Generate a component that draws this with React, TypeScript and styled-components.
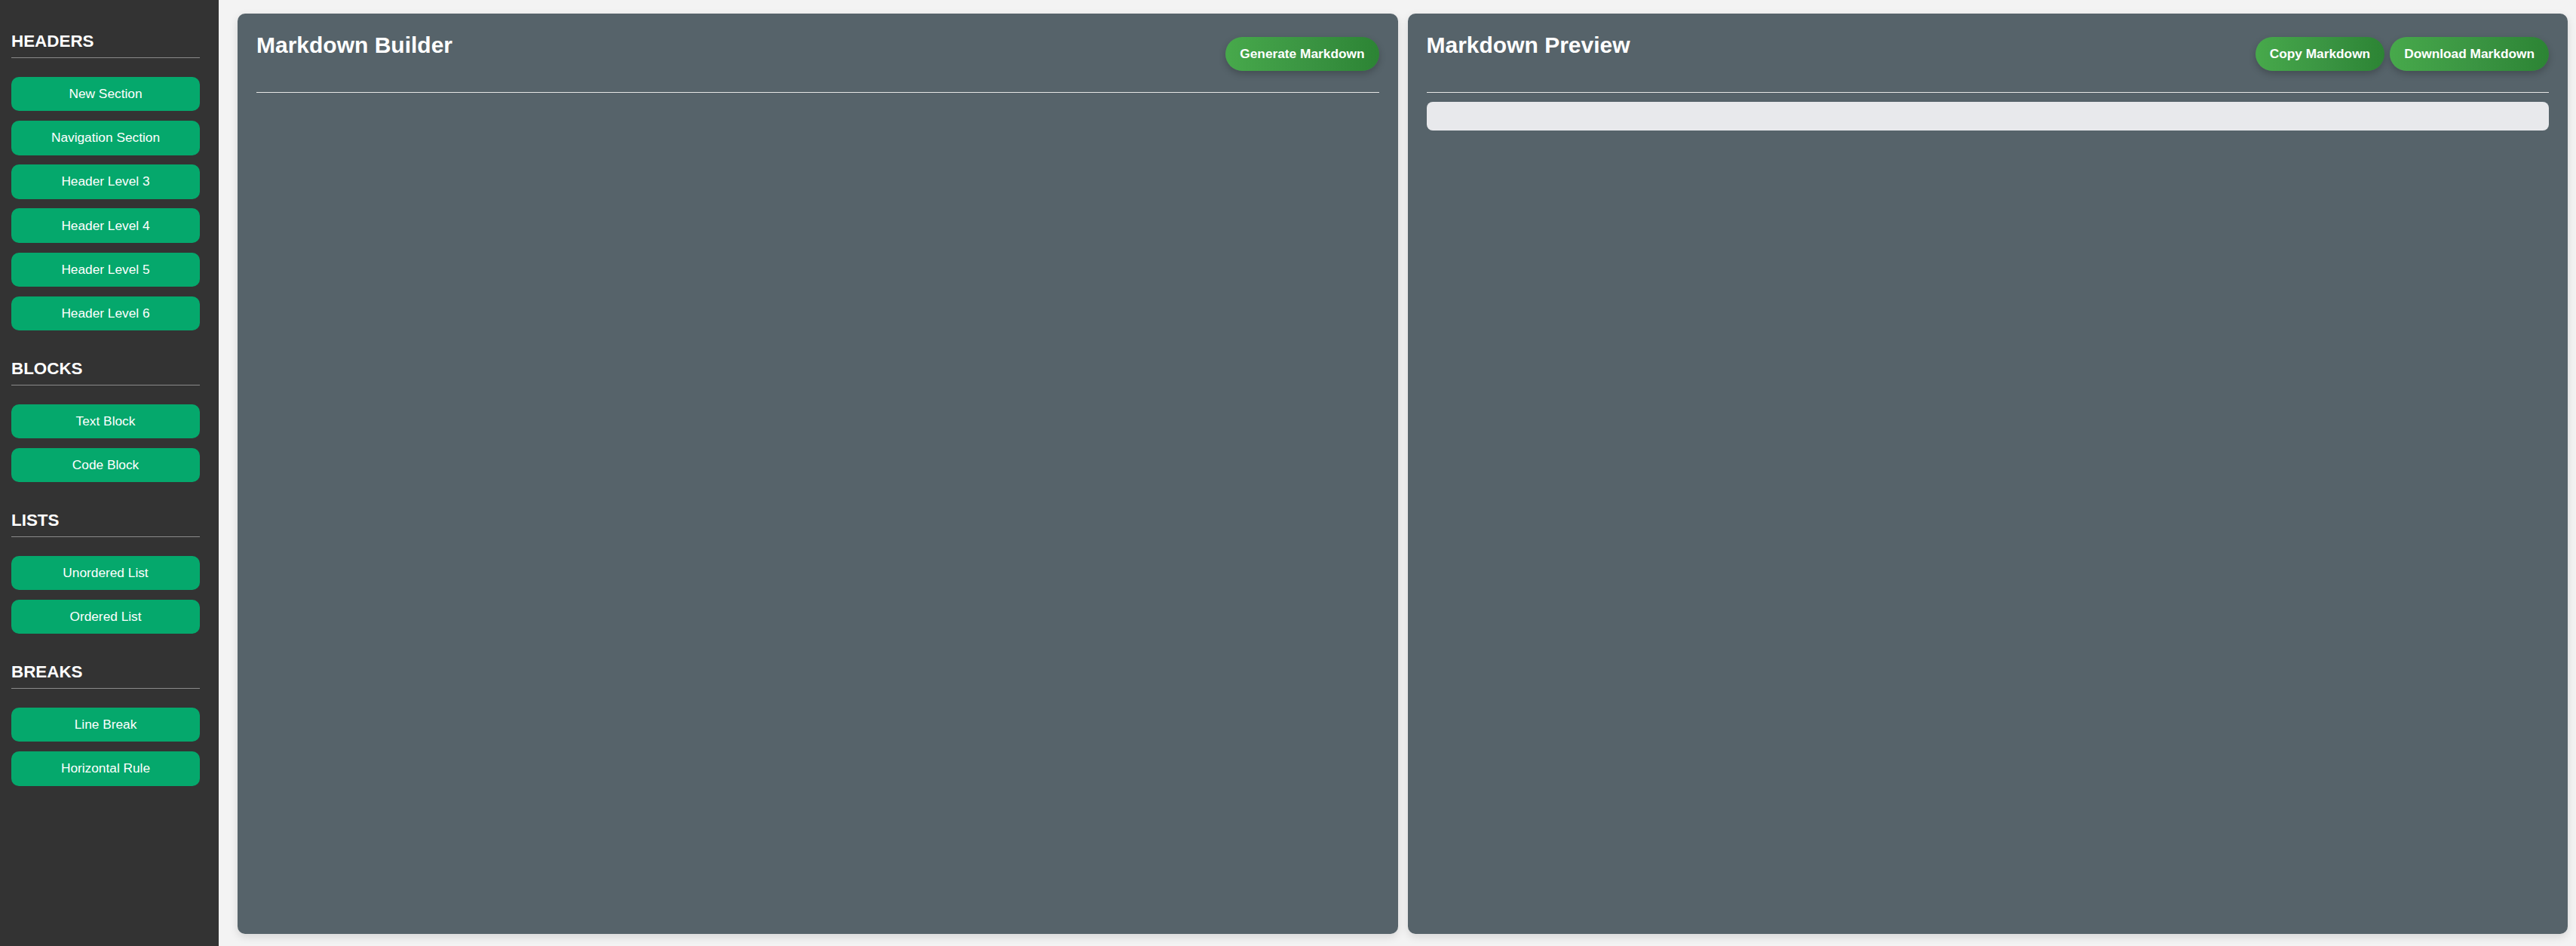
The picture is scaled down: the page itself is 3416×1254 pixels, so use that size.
import React from "react";
import styled, { createGlobalStyle } from "styled-components";

const GlobalStyle = createGlobalStyle`
  html, body {
    margin: 0;
    padding: 0;
    background: #f3f3f3;
    font-family: "Liberation Sans", Arial, sans-serif;
  }
  * { box-sizing: border-box; }
`;

const Layout = styled.div`
  display: flex;
  height: 1254px;
  width: 3416px;
  background: #f3f3f3;
`;

const Sidebar = styled.aside`
  width: 290px;
  flex: none;
  background: #333333;
  padding: 42px 25px 20px 15px;
  display: flex;
  flex-direction: column;
  gap: 37.5px;
`;

const Section = styled.section`
  display: flex;
  flex-direction: column;
`;

const SectionTitle = styled.h3`
  margin: 0 0 25px;
  padding-bottom: 8px;
  border-bottom: 1px solid #8a8a8a;
  color: #ffffff;
  font-size: 22.4px;
  font-weight: 700;
  line-height: 25.8px;
`;

const ButtonList = styled.div`
  display: flex;
  flex-direction: column;
  gap: 12.6px;
`;

const SideButton = styled.button`
  height: 45.6px;
  border: none;
  border-radius: 10px;
  background: #05a86c;
  color: #ffffff;
  font-family: "Liberation Sans", Arial, sans-serif;
  font-size: 17.3px;
  padding: 0;
  cursor: pointer;
`;

const Main = styled.main`
  flex: 1;
  display: flex;
  gap: 13px;
  padding: 18px 11px 16px 25px;
`;

const Panel = styled.div`
  flex: 1;
  min-width: 0;
  background: #56636a;
  border-radius: 10px;
  padding: 25px 25px;
  box-shadow: 0 4px 12px rgba(0, 0, 0, 0.12);
  display: flex;
  flex-direction: column;
`;

const PanelHeader = styled.div`
  display: flex;
  justify-content: space-between;
  align-items: flex-start;
  padding-bottom: 28px;
  border-bottom: 1px solid #e6e6e6;
`;

const PanelTitle = styled.h2`
  margin: 0;
  color: #ffffff;
  font-size: 30px;
  font-weight: 700;
  line-height: 34.5px;
`;

const Actions = styled.div`
  display: flex;
  gap: 7px;
  margin-top: 6px;
`;

const PillButton = styled.button`
  height: 45px;
  padding: 0 19px;
  border: none;
  border-radius: 23px;
  background: linear-gradient(90deg, #47a94b 0%, #3a9442 55%, #2c8434 100%);
  color: #ffffff;
  font-family: "Liberation Sans", Arial, sans-serif;
  font-size: 17.3px;
  font-weight: 700;
  box-shadow: 0 4px 10px rgba(0, 0, 0, 0.22);
  cursor: pointer;
`;

const PreviewBox = styled.pre`
  margin: 11.6px 0 0;
  height: 38px;
  background: #e8e9ec;
  border-radius: 8px;
`;

const sections: { title: string; items: string[] }[] = [
  {
    title: "HEADERS",
    items: [
      "New Section",
      "Navigation Section",
      "Header Level 3",
      "Header Level 4",
      "Header Level 5",
      "Header Level 6",
    ],
  },
  { title: "BLOCKS", items: ["Text Block", "Code Block"] },
  { title: "LISTS", items: ["Unordered List", "Ordered List"] },
  { title: "BREAKS", items: ["Line Break", "Horizontal Rule"] },
];

export default function App() {
  return (
    <>
      <GlobalStyle />
      <Layout>
        <Sidebar>
          {sections.map((s) => (
            <Section key={s.title}>
              <SectionTitle>{s.title}</SectionTitle>
              <ButtonList>
                {s.items.map((item) => (
                  <SideButton key={item}>{item}</SideButton>
                ))}
              </ButtonList>
            </Section>
          ))}
        </Sidebar>
        <Main>
          <Panel>
            <PanelHeader>
              <PanelTitle>Markdown Builder</PanelTitle>
              <Actions>
                <PillButton>Generate Markdown</PillButton>
              </Actions>
            </PanelHeader>
          </Panel>
          <Panel>
            <PanelHeader>
              <PanelTitle>Markdown Preview</PanelTitle>
              <Actions>
                <PillButton>Copy Markdown</PillButton>
                <PillButton>Download Markdown</PillButton>
              </Actions>
            </PanelHeader>
            <PreviewBox />
          </Panel>
        </Main>
      </Layout>
    </>
  );
}
